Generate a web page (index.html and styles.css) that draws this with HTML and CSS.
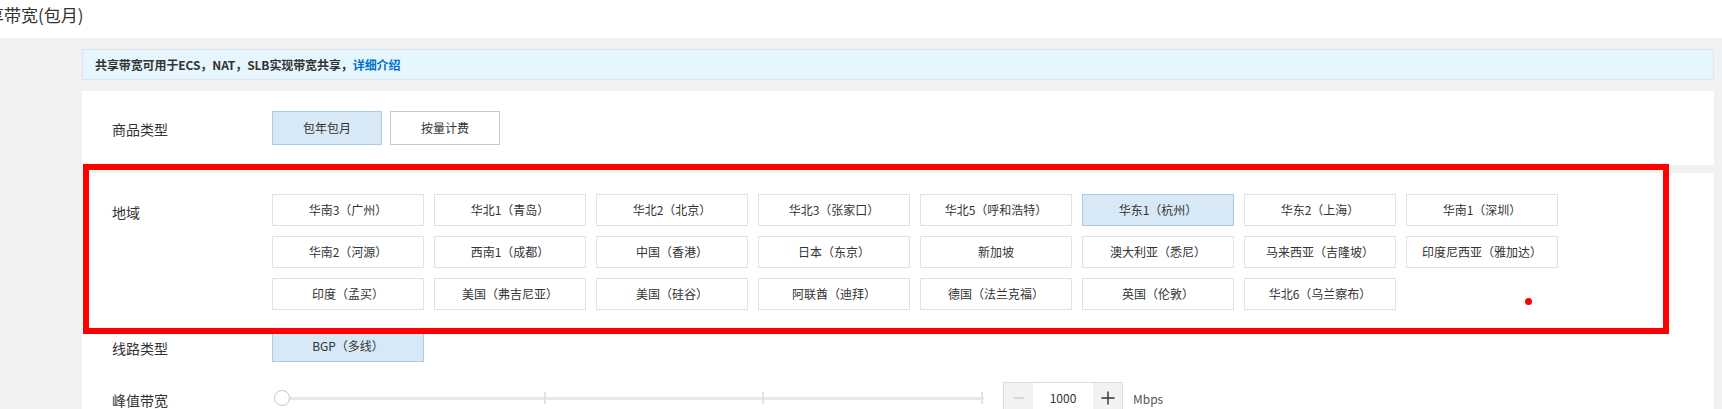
FILE: index.html
```html
<!DOCTYPE html>
<html lang="zh-CN">
<head>
    <meta charset="UTF-8">
    <meta name="viewport" content="width=device-width, initial-scale=1.0">
    <title>共享带宽(包月)</title>
    <link rel="stylesheet" href="styles.css">
</head>
<body>
    <div class="page-title">共享带宽(包月)</div>

    <div class="main">
        <div class="notice">
            共享带宽可用于ECS，NAT，SLB实现带宽共享，<a href="#" class="notice-link">详细介绍</a>
        </div>

        <div class="card card-type">
            <div class="form-row">
                <div class="form-label">商品类型</div>
                <div class="form-control">
                    <span class="tab active">包年包月</span>
                    <span class="tab">按量计费</span>
                </div>
            </div>
        </div>

        <div class="card card-config">
            <div class="form-row">
                <div class="form-label">地域</div>
                <div class="region-grid">
                    <span class="option">华南3（广州）</span>
                    <span class="option">华北1（青岛）</span>
                    <span class="option">华北2（北京）</span>
                    <span class="option">华北3（张家口）</span>
                    <span class="option">华北5（呼和浩特）</span>
                    <span class="option active">华东1（杭州）</span>
                    <span class="option">华东2（上海）</span>
                    <span class="option">华南1（深圳）</span>
                    <span class="option">华南2（河源）</span>
                    <span class="option">西南1（成都）</span>
                    <span class="option">中国（香港）</span>
                    <span class="option">日本（东京）</span>
                    <span class="option">新加坡</span>
                    <span class="option">澳大利亚（悉尼）</span>
                    <span class="option">马来西亚（吉隆坡）</span>
                    <span class="option">印度尼西亚（雅加达）</span>
                    <span class="option">印度（孟买）</span>
                    <span class="option">美国（弗吉尼亚）</span>
                    <span class="option">美国（硅谷）</span>
                    <span class="option">阿联酋（迪拜）</span>
                    <span class="option">德国（法兰克福）</span>
                    <span class="option">英国（伦敦）</span>
                    <span class="option">华北6（乌兰察布）</span>
                </div>
            </div>

            <div class="form-row">
                <div class="form-label">线路类型</div>
                <div class="form-control">
                    <span class="option active">BGP（多线）</span>
                </div>
            </div>

            <div class="form-row">
                <div class="form-label">峰值带宽</div>
                <div class="form-control">
                    <div class="slider">
                        <div class="slider-track"></div>
                        <span class="slider-tick"></span>
                        <span class="slider-tick"></span>
                        <span class="slider-tick"></span>
                        <div class="slider-handle"></div>
                    </div>
                    <div class="num-box">
                        <span class="num-btn minus">
                            <svg width="12" height="12" viewBox="0 0 12 12"><path d="M1 6h10" stroke="#c4c4c4" stroke-width="1.2"/></svg>
                        </span>
                        <span class="num-value">1000</span>
                        <span class="num-btn plus">
                            <svg width="14" height="14" viewBox="0 0 14 14"><path d="M0.5 7h13M7 0.5v13" stroke="#333" stroke-width="1.4"/></svg>
                        </span>
                    </div>
                    <span class="unit">Mbps</span>
                </div>
            </div>
        </div>
    </div>

    <!-- screenshot annotation -->
    <div class="mark-box"></div>
    <div class="mark-dot"></div>
</body>
</html>
```

FILE: styles.css
```css
* {
    margin: 0;
    padding: 0;
    box-sizing: border-box;
}

body {
    font-family: "Noto Sans CJK SC", "Liberation Sans", sans-serif;
    color: #333;
    background: #fff;
    position: relative;
    overflow: hidden;
}

.page-title {
    height: 38px;
    line-height: 30px;
    font-size: 17px;
    margin-left: -30px;
    white-space: nowrap;
    color: #333;
}

.main {
    background: #f0f1f3;
    padding: 11px 8px 40px 82px;
}

.notice {
    height: 31px;
    line-height: 29px;
    padding: 0 12px;
    border: 1px solid #dfe4e8;
    background: #e5f6fe;
    font-size: 12px;
    font-weight: bold;
    letter-spacing: -0.1px;
    color: #333;
    margin-bottom: 11px;
}

.notice-link {
    color: #0070cc;
    text-decoration: none;
}

.card {
    background: #fff;
    margin-bottom: 8px;
}

.card-type {
    padding: 20px 30px;
}

.card-config {
    padding: 21px 30px;
}

.form-row {
    display: flex;
    align-items: flex-start;
    margin-bottom: 20px;
}

.form-row:last-child {
    margin-bottom: 0;
}

.form-label {
    width: 160px;
    height: 32px;
    flex-shrink: 0;
    padding-top: 5px;
    line-height: 26px;
    font-size: 14px;
    color: #333;
}

.form-control {
    display: flex;
    align-items: center;
}

.tab {
    width: 110px;
    height: 34px;
    line-height: 32px;
    margin-right: 8px;
    border: 1px solid #c9c9c9;
    font-size: 12px;
    text-align: center;
    color: #333;
    background: #fff;
}

.tab.active,
.option.active {
    background: #d7e8f6;
    border-color: #a9cbe8;
}

.region-grid {
    display: grid;
    grid-template-columns: repeat(8, 152px);
    gap: 10px;
}

.option {
    display: block;
    width: 152px;
    height: 32px;
    line-height: 30px;
    border: 1px solid #e1e1e1;
    font-size: 12px;
    text-align: center;
    color: #333;
    white-space: nowrap;
}

.slider {
    position: relative;
    width: 712px;
    height: 32px;
    margin-right: 19px;
}

.slider-track {
    position: absolute;
    left: 8px;
    right: 0;
    top: 15px;
    height: 3px;
    background: #e8e8e8;
}

.slider-tick {
    position: absolute;
    top: 10px;
    width: 2px;
    height: 12px;
    background: #e3e3e3;
}

.slider-tick:nth-of-type(1) {
    left: 272px;
}

.slider-tick:nth-of-type(2) {
    left: 490px;
}

.slider-tick:nth-of-type(3) {
    left: 709px;
}

.slider-handle {
    position: absolute;
    left: 2px;
    top: 8px;
    width: 16px;
    height: 16px;
    border: 1px solid #c6c6c6;
    border-radius: 50%;
    background: #fff;
}

.num-box {
    display: flex;
    width: 120px;
    height: 32px;
    border: 1px solid #dcdcdc;
}

.num-btn {
    width: 29px;
    display: flex;
    align-items: center;
    justify-content: center;
    background: #f2f2f2;
}

.num-value {
    flex: 1;
    line-height: 30px;
    text-align: center;
    font-size: 12px;
    color: #333;
}

.unit {
    margin-left: 10px;
    font-size: 12px;
    color: #555;
}

.mark-box {
    position: absolute;
    left: 83px;
    top: 164px;
    width: 1586px;
    height: 170px;
    border: 6px solid #ff0000;
}

.mark-dot {
    position: absolute;
    left: 1525px;
    top: 298px;
    width: 7px;
    height: 7px;
    border-radius: 50%;
    background: #ff0000;
}
```
